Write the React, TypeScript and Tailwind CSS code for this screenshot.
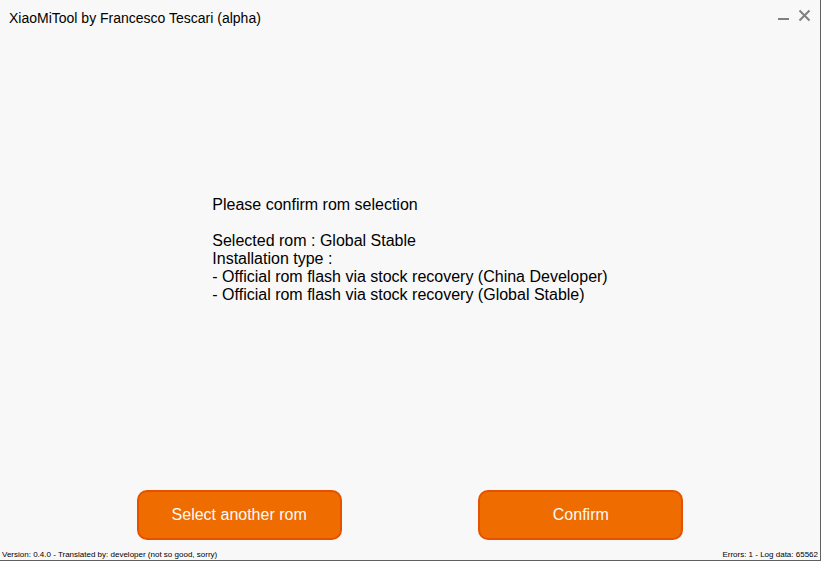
const STEPS = [
  "Official rom flash via stock recovery (China Developer)",
  "Official rom flash via stock recovery (Global Stable)",
];

const ACTION_CLASS =
  "h-[50px] w-[205px] rounded-[10px] border-2 border-[#e65100] bg-[#ef6c00] text-base text-[#fafafa] hover:bg-[#f57c00]";

function TitleBar() {
  return (
    <header className="flex items-start justify-between px-[9px] pt-[9px]">
      <h1 className="text-sm leading-[18px]">XiaoMiTool by Francesco Tescari (alpha)</h1>
      <div className="flex gap-2 text-[#808080]">
        <button type="button" aria-label="Minimize" className="size-[13px]">
          <svg viewBox="0 0 13 13" className="size-full">
            <path d="M1 10h11" stroke="currentColor" strokeWidth="2" />
          </svg>
        </button>
        <button type="button" aria-label="Close" className="size-[13px]">
          <svg viewBox="0 0 13 13" className="size-full">
            <path d="M1.5 1.5l10 10M11.5 1.5l-10 10" stroke="currentColor" strokeWidth="2" />
          </svg>
        </button>
      </div>
    </header>
  );
}

export default function App() {
  return (
    <div className="flex min-h-screen flex-col border-b border-r border-[#606060] bg-[#f8f8f8] font-['Liberation_Sans',Arial,sans-serif] text-black">
      <TitleBar />

      {/* Summary of what is about to be flashed */}
      <main className="flex grow items-center justify-center pb-[18px]">
        <div className="text-base leading-[18px]">
          <p>Please confirm rom selection</p>
          <p className="mt-[18px]">Selected rom : Global Stable</p>
          <p>Installation type :</p>
          <ul>
            {STEPS.map((step) => (
              <li key={step}>- {step}</li>
            ))}
          </ul>
        </div>
      </main>

      <div className="flex justify-evenly">
        <button type="button" className={ACTION_CLASS}>
          Select another rom
        </button>
        <button type="button" className={ACTION_CLASS}>
          Confirm
        </button>
      </div>

      <footer className="mt-[10px] flex justify-between px-[2px] text-[8px] leading-[10px]">
        <span>Version: 0.4.0 - Translated by: developer (not so good, sorry)</span>
        <span>Errors: 1 - Log data: 65562</span>
      </footer>
    </div>
  );
}
